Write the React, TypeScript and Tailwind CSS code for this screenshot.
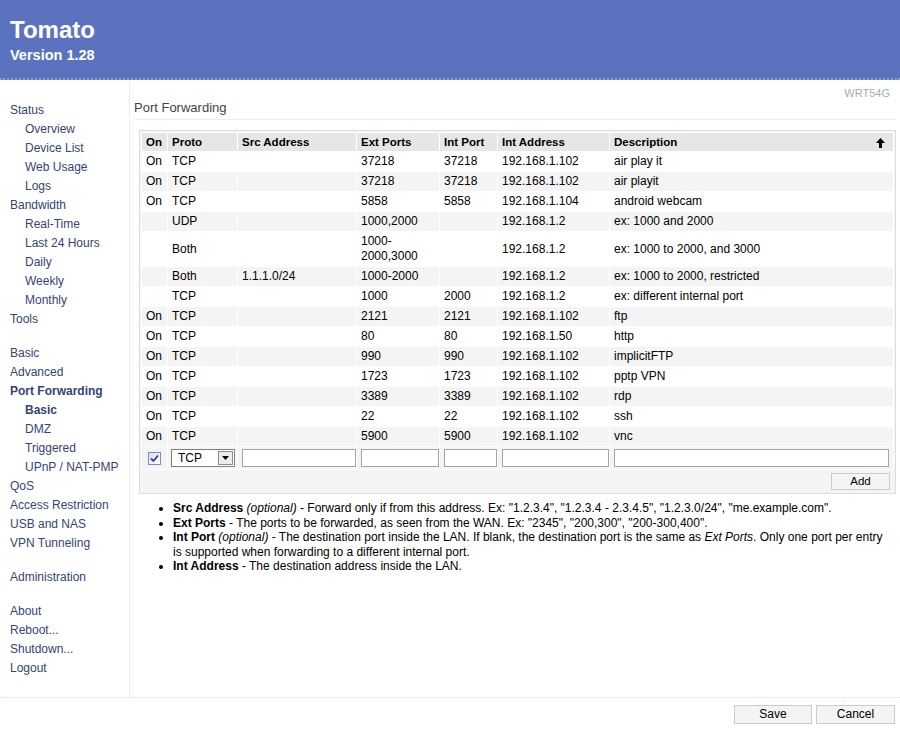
const font = { fontFamily: '"Liberation Sans", Arial, sans-serif' };

type NavItem = { label: string; sub?: boolean; bold?: boolean; gapBefore?: boolean };

const nav: NavItem[] = [
    { label: 'Status' },
    { label: 'Overview', sub: true },
    { label: 'Device List', sub: true },
    { label: 'Web Usage', sub: true },
    { label: 'Logs', sub: true },
    { label: 'Bandwidth' },
    { label: 'Real-Time', sub: true },
    { label: 'Last 24 Hours', sub: true },
    { label: 'Daily', sub: true },
    { label: 'Weekly', sub: true },
    { label: 'Monthly', sub: true },
    { label: 'Tools' },
    { label: 'Basic', gapBefore: true },
    { label: 'Advanced' },
    { label: 'Port Forwarding', bold: true },
    { label: 'Basic', sub: true, bold: true },
    { label: 'DMZ', sub: true },
    { label: 'Triggered', sub: true },
    { label: 'UPnP / NAT-PMP', sub: true },
    { label: 'QoS' },
    { label: 'Access Restriction' },
    { label: 'USB and NAS' },
    { label: 'VPN Tunneling' },
    { label: 'Administration', gapBefore: true },
    { label: 'About', gapBefore: true },
    { label: 'Reboot...' },
    { label: 'Shutdown...' },
    { label: 'Logout' },
];

type Row = [string, string, string, string[], string, string, string];

const rows: Row[] = [
    ['On', 'TCP', '', ['37218'], '37218', '192.168.1.102', 'air play it'],
    ['On', 'TCP', '', ['37218'], '37218', '192.168.1.102', 'air playit'],
    ['On', 'TCP', '', ['5858'], '5858', '192.168.1.104', 'android webcam'],
    ['', 'UDP', '', ['1000,2000'], '', '192.168.1.2', 'ex: 1000 and 2000'],
    ['', 'Both', '', ['1000-', '2000,3000'], '', '192.168.1.2', 'ex: 1000 to 2000, and 3000'],
    ['', 'Both', '1.1.1.0/24', ['1000-2000'], '', '192.168.1.2', 'ex: 1000 to 2000, restricted'],
    ['', 'TCP', '', ['1000'], '2000', '192.168.1.2', 'ex: different internal port'],
    ['On', 'TCP', '', ['2121'], '2121', '192.168.1.102', 'ftp'],
    ['On', 'TCP', '', ['80'], '80', '192.168.1.50', 'http'],
    ['On', 'TCP', '', ['990'], '990', '192.168.1.102', 'implicitFTP'],
    ['On', 'TCP', '', ['1723'], '1723', '192.168.1.102', 'pptp VPN'],
    ['On', 'TCP', '', ['3389'], '3389', '192.168.1.102', 'rdp'],
    ['On', 'TCP', '', ['22'], '22', '192.168.1.102', 'ssh'],
    ['On', 'TCP', '', ['5900'], '5900', '192.168.1.102', 'vnc'],
];

function Sidebar() {
    return (
        <div className="w-[130px] shrink-0 border-r border-[#eeeeee] pt-[21px] text-[12px] text-[#334477]">
            {nav.map((item, i) => (
                <div
                    key={i}
                    className={`h-[19px] leading-[19px] whitespace-nowrap ${item.sub ? 'pl-[25px]' : 'pl-[10px]'} ${item.bold ? 'font-bold' : ''} ${item.gapBefore ? 'mt-[15px]' : ''}`}
                >
                    {item.label}
                </div>
            ))}
        </div>
    );
}

function SortArrow() {
    return (
        <svg width="9" height="10" viewBox="0 0 9 10" className="absolute right-[8px] top-[5px]">
            <path d="M4.5 0 L9 5 H6 V10 H3 V5 H0 Z" fill="#000" />
        </svg>
    );
}

function CheckBox() {
    return (
        <span className="inline-flex h-[13px] w-[13px] items-center justify-center border border-[#7a8cb8] bg-gradient-to-br from-[#dcdfe6] to-white align-middle">
            <svg width="9" height="9" viewBox="0 0 9 9">
                <path d="M1 4.5 L3.5 7 L8 1.5" stroke="#2544a8" strokeWidth="1.8" fill="none" />
            </svg>
        </span>
    );
}

function SelectBox() {
    return (
        <div className="flex h-[18px] w-[64px] items-center border border-[#7f7f7f] bg-white">
            <span className="flex-1 pl-[6px] text-[12px] leading-[16px]">TCP</span>
            <span className="mr-[1px] flex h-[14px] w-[15px] items-center justify-center border border-[#8a8a8a] bg-[#ececec]">
                <svg width="7" height="4" viewBox="0 0 7 4">
                    <path d="M0 0 H7 L3.5 4 Z" fill="#000" />
                </svg>
            </span>
        </div>
    );
}

function TextBox() {
    return <div className="h-[18px] w-full border border-[#a5a5a5] bg-white" />;
}

function ForwardTable() {
    const th =
        'relative border border-white bg-[#e6e6e6] text-left font-bold text-[11.5px] leading-[14px] py-[2px] pl-[4px]';
    return (
        <div className="ml-[5px] border border-[#dddddd] bg-[#f4f4f4] p-[1px]">
            <table className="w-full table-fixed border-collapse bg-white text-[12px] text-black">
                <colgroup>
                    <col className="w-[26px]" />
                    <col className="w-[70px]" />
                    <col className="w-[119px]" />
                    <col className="w-[83px]" />
                    <col className="w-[58px]" />
                    <col className="w-[112px]" />
                    <col />
                </colgroup>
                <thead>
                    <tr>
                        <th className={th}>On</th>
                        <th className={th}>Proto</th>
                        <th className={th}>Src Address</th>
                        <th className={th}>Ext Ports</th>
                        <th className={th}>Int Port</th>
                        <th className={th}>Int Address</th>
                        <th className={th}>
                            Description
                            <SortArrow />
                        </th>
                    </tr>
                </thead>
                <tbody>
                    {rows.map((r, i) => {
                        const td = `${i % 2 === 1 ? 'bg-[#f4f4f4] border-white' : 'bg-white border-white'} border pl-[4px] py-[2px] leading-[15px] align-middle`;
                        return (
                            <tr key={i}>
                                <td className={td}>{r[0]}</td>
                                <td className={td}>{r[1]}</td>
                                <td className={td}>{r[2]}</td>
                                <td className={td}>
                                    {r[3].map((p, j) => (
                                        <div key={j}>{p}</div>
                                    ))}
                                </td>
                                <td className={td}>{r[4]}</td>
                                <td className={td}>{r[5]}</td>
                                <td className={td}>{r[6]}</td>
                            </tr>
                        );
                    })}
                    <tr>
                        <td className="border border-white bg-[#f4f4f4] py-[2px] pl-[6px]">
                            <CheckBox />
                        </td>
                        <td className="border border-white bg-[#f4f4f4] py-[2px] pl-[3px]">
                            <SelectBox />
                        </td>
                        <td className="border border-white bg-[#f4f4f4] py-[2px] pl-[4px]">
                            <TextBox />
                        </td>
                        <td className="border border-white bg-[#f4f4f4] py-[2px] pl-[4px]">
                            <TextBox />
                        </td>
                        <td className="border border-white bg-[#f4f4f4] py-[2px] pl-[4px]">
                            <TextBox />
                        </td>
                        <td className="border border-white bg-[#f4f4f4] py-[2px] pl-[4px]">
                            <TextBox />
                        </td>
                        <td className="border border-white bg-[#f4f4f4] py-[2px] pl-[4px] pr-[4px]">
                            <TextBox />
                        </td>
                    </tr>
                </tbody>
            </table>
            <div className="flex justify-end pt-[3px] pb-[2px] pr-[4px]">
                <button
                    type="button"
                    className="h-[17px] w-[59px] border border-[#cccccc] bg-[#f4f4f4] text-[11.5px] leading-[15px] text-black"
                >
                    Add
                </button>
            </div>
        </div>
    );
}

function Notes() {
    return (
        <ul className="mt-[7px] list-disc pl-[39px] text-[12px] leading-[14.5px] text-black whitespace-nowrap">
            <li>
                <b>Src Address</b> <i>(optional)</i> - Forward only if from this address. Ex: "1.2.3.4", "1.2.3.4 - 2.3.4.5",
                "1.2.3.0/24", "me.example.com".
            </li>
            <li>
                <b>Ext Ports</b> - The ports to be forwarded, as seen from the WAN. Ex: "2345", "200,300", "200-300,400".
            </li>
            <li>
                <b>Int Port</b> <i>(optional)</i> - The destination port inside the LAN. If blank, the destination port is the same
                as <i>Ext Ports</i>. Only one port per entry
                <br />
                is supported when forwarding to a different internal port.
            </li>
            <li>
                <b>Int Address</b> - The destination address inside the LAN.
            </li>
        </ul>
    );
}

export default function App() {
    return (
        <div className="flex h-[729px] w-[900px] flex-col overflow-hidden bg-white" style={font}>
            <div className="h-[80px] shrink-0 border-b-[2px] border-dotted border-[#8c9bd2] bg-[#5b73bf] pl-[10px] pt-[16px] text-white">
                <div className="text-[24px] font-bold leading-[28px]">Tomato</div>
                <div className="mt-[2px] text-[14.5px] font-bold leading-[18px]">Version 1.28</div>
            </div>
            <div className="flex h-[617px] shrink-0">
                <Sidebar />
                <div className="flex-1 pl-[4px] pr-[4px]">
                    <div className="mt-[7px] pr-[6px] text-right text-[11px] leading-[13px] text-[#aaaaaa]">WRT54G</div>
                    <div className="border-b border-[#eeeeee] pb-[3px] text-[13px] leading-[16px] text-[#444444]">
                        Port Forwarding
                    </div>
                    <div className="mt-[10px]">
                        <ForwardTable />
                    </div>
                    <Notes />
                </div>
            </div>
            <div className="flex flex-1 justify-end gap-[4px] border-t border-dotted border-[#dddddd] pt-[7px] pr-[5px]">
                <button
                    type="button"
                    className="h-[19px] w-[78px] border border-[#cccccc] bg-[#f4f4f4] text-[12px] leading-[17px] text-black"
                >
                    Save
                </button>
                <button
                    type="button"
                    className="h-[19px] w-[79px] border border-[#cccccc] bg-[#f4f4f4] text-[12px] leading-[17px] text-black"
                >
                    Cancel
                </button>
            </div>
        </div>
    );
}
